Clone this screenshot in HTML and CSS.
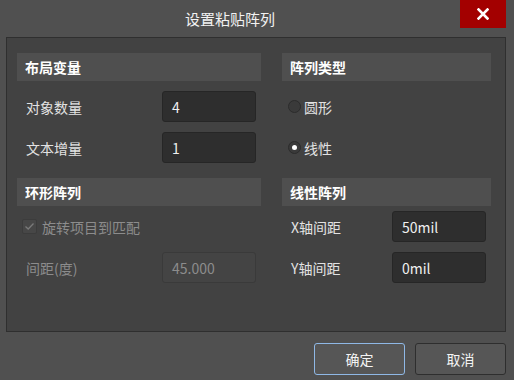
FILE: index.html
```html
<!DOCTYPE html>
<html lang="zh-CN">
<head>
    <meta charset="UTF-8">
    <title>设置粘贴阵列</title>
    <link rel="stylesheet" href="styles.css">
</head>
<body>
    <div class="titlebar">
        <div class="title">设置粘贴阵列</div>
        <div class="close">
            <svg width="12" height="12" viewBox="0 0 12 12"><path d="M1.5 1.5 L10.5 10.5 M10.5 1.5 L1.5 10.5" stroke="#fff" stroke-width="2.6" stroke-linecap="square"/></svg>
        </div>
    </div>

    <div class="panel">
        <div class="section">
            <div class="head">布局变量</div>
            <div class="row">
                <span class="label">对象数量</span>
                <div class="field">4</div>
            </div>
            <div class="row">
                <span class="label">文本增量</span>
                <div class="field">1</div>
            </div>
        </div>

        <div class="section">
            <div class="head">阵列类型</div>
            <div class="row option">
                <span class="radio"></span>
                <span class="label">圆形</span>
            </div>
            <div class="row option">
                <span class="radio checked"></span>
                <span class="label">线性</span>
            </div>
        </div>

        <div class="section">
            <div class="head">环形阵列</div>
            <div class="row first option check">
                <span class="checkbox">
                    <svg width="11" height="9" viewBox="0 0 11 9"><path d="M1.5 4.5 L4.2 7 L9.5 1.5" fill="none" stroke="#7a7a7a" stroke-width="1.3"/></svg>
                </span>
                <span class="label off">旋转项目到匹配</span>
            </div>
            <div class="row">
                <span class="label off">间距(度)</span>
                <div class="field disabled">45.000</div>
            </div>
        </div>

        <div class="section">
            <div class="head">线性阵列</div>
            <div class="row first">
                <span class="label">X轴间距</span>
                <div class="field">50mil</div>
            </div>
            <div class="row">
                <span class="label">Y轴间距</span>
                <div class="field">0mil</div>
            </div>
        </div>
    </div>

    <div class="footer">
        <button class="btn primary">确定</button>
        <button class="btn">取消</button>
    </div>
</body>
</html>
```

FILE: styles.css
```css
body{
    margin:0px;
    width:514px;
    height:380px;
    background-color:#505050;
    font-family:"Noto Sans CJK SC","Liberation Sans",sans-serif;
    color:#e6e6e6;
    font-size:14px;
    overflow:hidden;
}
.titlebar{
    display:flex;
    height:37px;
}
.title{
    flex:1;
    text-align:center;
    font-size:15px;
    line-height:38px;
    color:#f2f2f2;
}
.close{
    width:46px;
    height:28px;
    margin-right:8px;
    background-color:#a30000;
    display:flex;
    justify-content:center;
    align-items:center;
}
.panel{
    margin:0px 8px 0px 6px;
    height:293px;
    border:1px solid #2f2f2f;
    background-color:#424242;
    padding:15px 0px 0px 10px;
    box-sizing:border-box;
    height:295px;
    display:grid;
    grid-template-columns:244px 209px;
    grid-template-rows:110px auto;
    column-gap:21px;
    row-gap:15px;
    align-content:start;
}
.head{
    height:28px;
    background-color:#4f4f4f;
    font-weight:bold;
    color:#fff;
    font-size:14px;
    line-height:28px;
    padding-left:8px;
}
.row{
    display:flex;
    justify-content:space-between;
    align-items:center;
    height:31px;
    margin-top:10px;
    padding:0px 5px 0px 9px;
}
.row.first{
    margin-top:5px;
}
.label{
    color:#e2e2e2;
    font-size:14px;
}
.label.off{
    color:#8c8c8c;
}
.field{
    width:94px;
    height:31px;
    box-sizing:border-box;
    background-color:#2e2e2e;
    border:1px solid #262626;
    border-radius:3px;
    padding-left:9px;
    line-height:30px;
    font-size:14px;
    color:#f0f0f0;
}
.field.disabled{
    background-color:#444444;
    border-color:#3a3a3a;
    color:#8c8c8c;
}
.option{
    justify-content:flex-start;
    padding-left:6px;
}
.radio{
    width:13px;
    height:13px;
    box-sizing:border-box;
    border-radius:50%;
    background-color:#3a3a3a;
    border:1px solid #2c2c2c;
    margin-right:3px;
    position:relative;
}
.radio.checked::after{
    content:"";
    position:absolute;
    left:3px;
    top:3px;
    width:5px;
    height:5px;
    border-radius:50%;
    background-color:#fff;
}
.check{
    padding-left:5px;
}
.checkbox{
    width:15px;
    height:15px;
    box-sizing:border-box;
    background-color:#474747;
    border:1px solid #3c3c3c;
    border-radius:2px;
    margin-right:5px;
    display:flex;
    justify-content:center;
    align-items:center;
}
.footer{
    display:flex;
    justify-content:flex-end;
    gap:10px;
    margin:11px 8px 0px 0px;
}
.btn{
    width:91px;
    height:32px;
    background-color:#565656;
    border:1px solid #2e2e2e;
    border-radius:3px;
    color:#f4f4f4;
    font-family:"Noto Sans CJK SC","Liberation Sans",sans-serif;
    font-size:14px;
    padding:0px;
}
.btn.primary{
    border:1px solid #8fb8e6;
}
```
